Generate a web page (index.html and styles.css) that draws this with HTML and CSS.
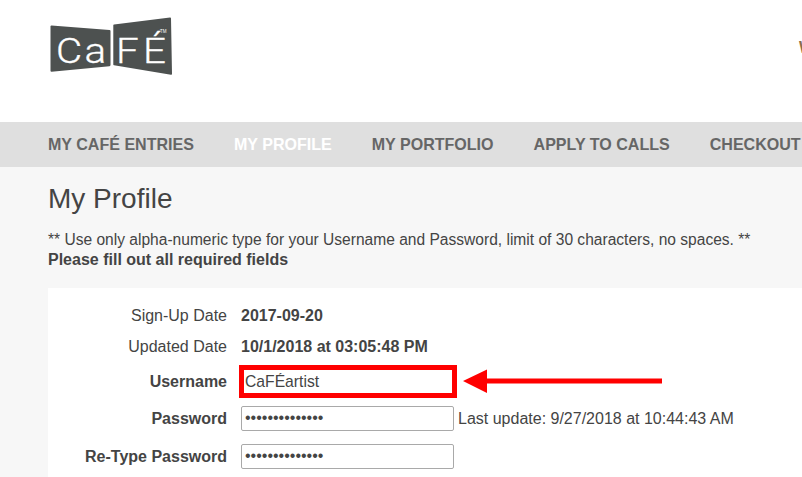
FILE: index.html
```html
<!DOCTYPE html>
<html lang="en">
<head>
<meta charset="utf-8">
<title>My Profile</title>
<link rel="stylesheet" href="styles.css">
</head>
<body>
<header class="top">
  <svg class="logo" width="122" height="58" viewBox="0 0 122 58" aria-label="CaFÉ logo">
    <path class="logo-panel" d="M1.500 8.500 L59.500 13 Q60.500 13.200 60.500 14 L60.500 48 Q60.500 49 59.500 49.200 L1.500 54.700 Q0.500 54.700 0.500 53.700 L0.500 9.500 Q0.500 8.500 1.500 8.500Z"/>
    <path class="logo-panel" d="M64 7.500 L120 0.600 Q121 0.500 121 1.500 L122 57 Q122 58 121 57.800 L64 48.300 Q63.300 48.200 63.300 47.500 L63.300 8.300 Q63.300 7.600 64 7.500Z"/>
    <text class="logo-word" transform="scale(1.120 1)" x="5.400 30.800 59 83" y="46">CaFÉ</text>
    <text class="logo-tm" x="110" y="16">TM</text>
  </svg>
  <span class="welcome">Welcome</span>
</header>
<nav class="nav">
  <a class="nav-link">MY CAFÉ ENTRIES</a>
  <a class="nav-link nav-link-active">MY PROFILE</a>
  <a class="nav-link">MY PORTFOLIO</a>
  <a class="nav-link">APPLY TO CALLS</a>
  <a class="nav-link">CHECKOUT</a>
</nav>
<main class="main">
  <h1 class="title">My Profile</h1>
  <p class="note"><span class="note-line">** Use only alpha-numeric type for your Username and Password, limit of 30 characters, no spaces. **</span><br><strong>Please fill out all required fields</strong></p>
  <section class="card">
    <div class="row row-date1"><span class="label">Sign-Up Date</span><strong class="value">2017-09-20</strong></div>
    <div class="row row-date2"><span class="label">Updated Date</span><strong class="value">10/1/2018 at 03:05:48 PM</strong></div>
    <div class="row row-user"><strong class="label">Username</strong>
      <span class="field-wrap">
        <input class="input input-plain" type="text" value="CaFÉartist">
        <span class="callout-box"></span>
        <svg class="callout-arrow" width="200" height="26" viewBox="0 0 200 26"><path d="M0 13 L24 1.500 L24 10.500 L199 10.500 L199 15.500 L24 15.500 L24 25 Z"/></svg>
      </span>
    </div>
    <div class="row row-pass"><strong class="label">Password</strong><input class="input" type="password" value="abcdefghijklmn"><span class="hint">Last update: 9/27/2018 at 10:44:43 AM</span></div>
    <div class="row row-pass2"><strong class="label">Re-Type Password</strong><input class="input" type="password" value="abcdefghijklmn"></div>
  </section>
</main>
</body>
</html>
```
FILE: styles.css
```css
* { box-sizing: border-box; }
html, body { margin: 0; height: 477px; overflow: hidden; }
body {
  background: #f7f7f7;
  color: #444;
  font-family: "Liberation Sans", Arial, sans-serif;
  font-size: 16px;
}
.top {
  height: 122px;
  background: #fff;
  display: flex;
  align-items: flex-start;
  padding: 17px 0 0 50px;
  white-space: nowrap;
  overflow: hidden;
}
.logo { flex: none; display: block; }
.logo-panel { fill: #4d5150; }
.logo-word {
  fill: #fff;
  stroke: #fff;
  stroke-width: 0.300px;
  font-family: Roboto, sans-serif;
  font-weight: 300;
  font-size: 36px;
}
.logo-tm { fill: #fff; font-family: "Liberation Sans", sans-serif; font-size: 4.500px; }
.welcome {
  margin-left: 627px;
  margin-top: 22px;
  font-size: 16px;
  font-weight: 700;
  color: #8a6d4b;
}
.nav {
  height: 45px;
  background: #dfdfdf;
  display: flex;
  align-items: center;
  gap: 40px;
  padding-left: 48px;
  white-space: nowrap;
  overflow: hidden;
}
.nav-link { font-size: 16.060px; font-weight: 700; color: #666; }
.nav-link-active { color: #fff; }
.main { padding: 15px 0 0 48px; }
.title {
  margin: 0;
  font-size: 28px;
  font-weight: 400;
  line-height: 34px;
  color: #444;
}
.note { margin: 14px 0 0; font-size: 16px; line-height: 20px; white-space: nowrap; }
.note-line { font-size: 15.570px; }
.card {
  margin-top: 18px;
  background: #fff;
  height: 200px;
  padding-top: 12px;
}
.row {
  display: grid;
  grid-template-columns: 179px auto 1fr;
  column-gap: 14px;
  align-items: center;
  white-space: nowrap;
}
.row-date1 { height: 30px; }
.row-date2 { height: 32px; }
.row-user { height: 38px; }
.row-pass { height: 36px; }
.row-pass2 { height: 40px; }
.label, .value, .hint { padding-top: 2px; }
.label { text-align: right; }
.value { font-weight: 700; }
.field-wrap { position: relative; display: block; width: 213px; height: 25px; }
.input {
  display: block;
  width: 213px;
  height: 25px;
  padding: 0 3px;
  border: 1px solid #a9a9a9;
  border-radius: 2px;
  background: #fff;
  color: #444;
  font-family: "Liberation Sans", Arial, sans-serif;
  font-size: 16px;
}
.input-plain { border-color: transparent; font-size: 15.700px; padding-top: 2px; }
.callout-box {
  position: absolute;
  left: -2px;
  top: -4px;
  width: 218px;
  height: 33px;
  border: 5px solid #f00;
}
.callout-arrow { position: absolute; left: 222px; top: -1px; }
.callout-arrow path { fill: #f00; }
.hint { margin-left: -10px; }
```
